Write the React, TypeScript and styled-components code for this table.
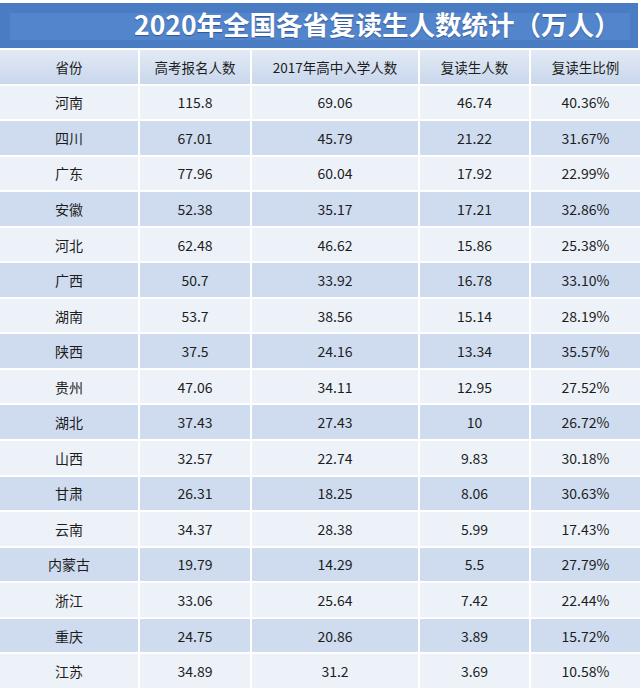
import * as React from 'react';
import styled, { createGlobalStyle } from 'styled-components';

const GlobalStyle = createGlobalStyle`
  html, body {
    margin: 0;
    padding: 0;
    background: #ffffff;
  }
  body {
    font-family: 'Noto Sans CJK SC', 'Noto Sans', sans-serif;
  }
`;

const Page = styled.div`
  width: 641px;
  padding-top: 3px;
  background: #ffffff;
`;

const TitleBar = styled.div`
  width: 638px;
  height: 45px;
  background: #4a7cc4;
  padding: 10px 8px 8px 10px;
  box-sizing: border-box;
  display: flex;
`;

const TitleInner = styled.div`
  flex: 1;
  background: #5285cc;
  display: flex;
  align-items: center;
  padding-left: 124px;
  overflow: visible;
`;

const Title = styled.h1`
  margin: -4px 0 0;
  font-family: 'Noto Sans CJK SC', sans-serif;
  font-size: 26.5px;
  font-weight: 700;
  line-height: 1;
  color: #ffffff;
  white-space: nowrap;
  letter-spacing: 0;
  text-shadow: 0 1px 1px rgba(20, 40, 90, 0.5);
`;

const Table = styled.div`
  margin-top: 2px;
  display: grid;
  grid-template-columns: 138px 110px 166px 109px 109px;
  grid-auto-rows: 33.55px;
  column-gap: 2px;
  row-gap: 2px;
  width: 640px;
`;

const Cell = styled.div<{ $dark?: boolean }>`
  display: flex;
  align-items: center;
  justify-content: center;
  font-size: 14px;
  color: #1d1d1d;
  background: ${(p) => (p.$dark ? '#cfdcef' : '#edf2f9')};
`;

const HeaderCell = styled(Cell)`
  font-size: 13.5px;
  background: linear-gradient(#e2eaf5, #c9d7ec);
`;

const headers = ['省份', '高考报名人数', '2017年高中入学人数', '复读生人数', '复读生比例'];

const rows: [string, string, string, string, string][] = [
  ['河南', '115.8', '69.06', '46.74', '40.36%'],
  ['四川', '67.01', '45.79', '21.22', '31.67%'],
  ['广东', '77.96', '60.04', '17.92', '22.99%'],
  ['安徽', '52.38', '35.17', '17.21', '32.86%'],
  ['河北', '62.48', '46.62', '15.86', '25.38%'],
  ['广西', '50.7', '33.92', '16.78', '33.10%'],
  ['湖南', '53.7', '38.56', '15.14', '28.19%'],
  ['陕西', '37.5', '24.16', '13.34', '35.57%'],
  ['贵州', '47.06', '34.11', '12.95', '27.52%'],
  ['湖北', '37.43', '27.43', '10', '26.72%'],
  ['山西', '32.57', '22.74', '9.83', '30.18%'],
  ['甘肃', '26.31', '18.25', '8.06', '30.63%'],
  ['云南', '34.37', '28.38', '5.99', '17.43%'],
  ['内蒙古', '19.79', '14.29', '5.5', '27.79%'],
  ['浙江', '33.06', '25.64', '7.42', '22.44%'],
  ['重庆', '24.75', '20.86', '3.89', '15.72%'],
  ['江苏', '34.89', '31.2', '3.69', '10.58%'],
];

export default function App() {
  return (
    <>
      <GlobalStyle />
      <Page>
        <TitleBar>
          <TitleInner>
            <Title>2020年全国各省复读生人数统计（万人）</Title>
          </TitleInner>
        </TitleBar>
        <Table>
          {headers.map((h) => (
            <HeaderCell key={h}>{h}</HeaderCell>
          ))}
          {rows.map((row, i) =>
            row.map((value, j) => (
              <Cell key={`${i}-${j}`} $dark={i % 2 === 1}>
                {value}
              </Cell>
            ))
          )}
        </Table>
      </Page>
    </>
  );
}
